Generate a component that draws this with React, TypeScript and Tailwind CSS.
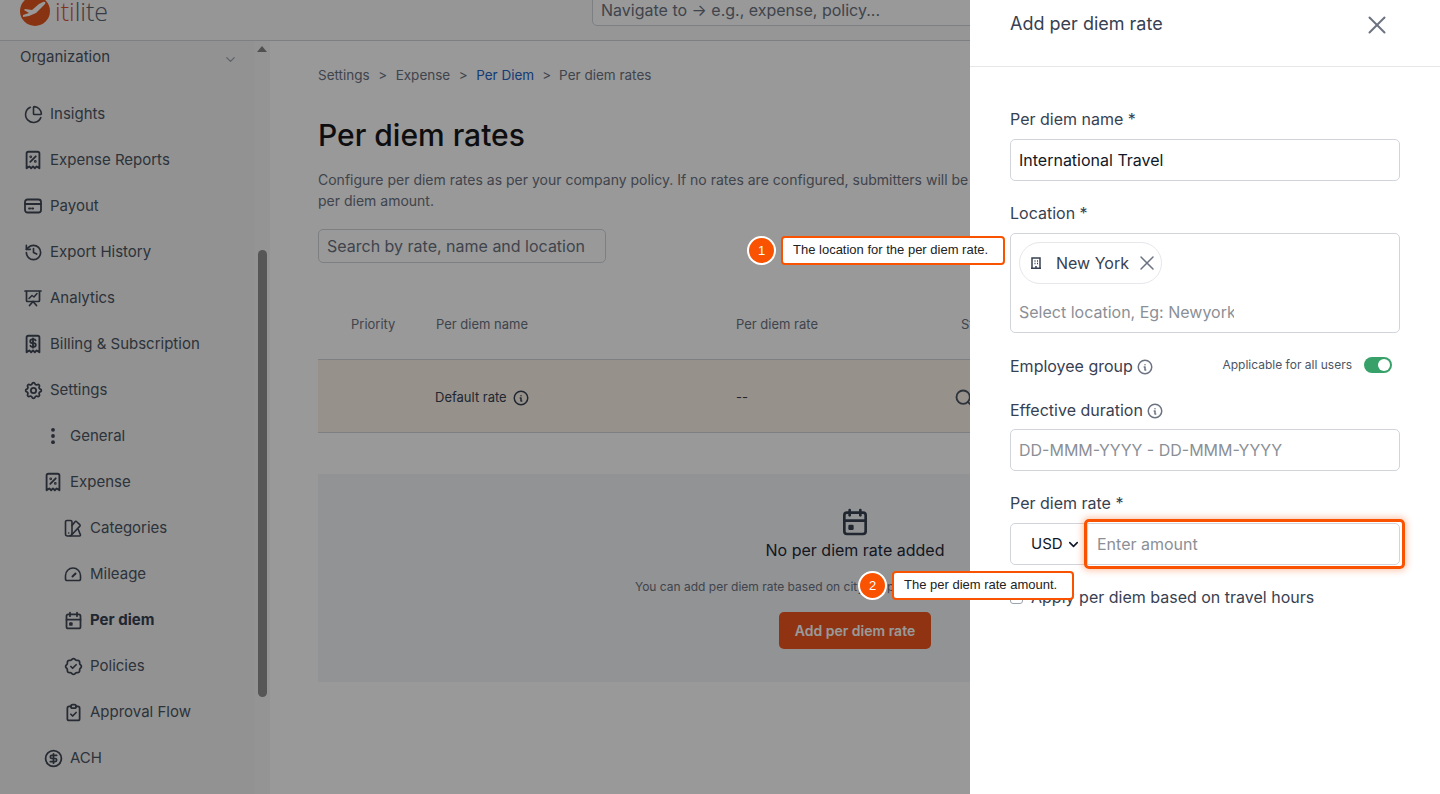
import type { ReactNode } from 'react';
import { ChevronDown, History, ChartPie, Search, X, CircleDollarSign } from 'lucide-react';
import {
  TbReceiptTax,
  TbReceiptDollar,
  TbSettings,
  TbCalendarEvent,
  TbRosetteDiscountCheck,
  TbClipboardCheck,
  TbInfoCircle,
} from 'react-icons/tb';

function CardIcon() {
  return (
    <svg width="18" height="18" viewBox="0 0 18 18" fill="none" stroke="currentColor" strokeWidth="1.8" strokeLinecap="round">
      <rect x="1" y="2.5" width="16" height="13" rx="2.5" />
      <path d="M1 7h16M5 11.5h1.2M8 11.5h1.2" />
    </svg>
  );
}

function AnalyticsIcon() {
  return (
    <svg width="18" height="18" viewBox="0 0 18 18" fill="none" stroke="currentColor" strokeWidth="1.7" strokeLinecap="round" strokeLinejoin="round">
      <path d="M1 2h16M2.5 2v9.5a1 1 0 0 0 1 1h11a1 1 0 0 0 1-1V2" />
      <path d="M5 9.5l3-3 2 1.5 3-3.5" strokeWidth="1.5" />
      <path d="M5.5 16.5l3.5-4 3.5 4" />
    </svg>
  );
}

function DotsIcon() {
  return (
    <svg width="18" height="18" viewBox="0 0 18 18" fill="currentColor">
      <circle cx="9" cy="2.8" r="1.9" />
      <circle cx="9" cy="9" r="1.9" />
      <circle cx="9" cy="15.2" r="1.9" />
    </svg>
  );
}

function SwatchIcon() {
  return (
    <svg width="18" height="18" viewBox="0 0 18 18" fill="none" stroke="currentColor" strokeWidth="1.6" strokeLinejoin="round" strokeLinecap="round">
      <path d="M3 1.5h3.5A1.5 1.5 0 0 1 8 3v11a3 3 0 0 1-3 3H3.5a2 2 0 0 1-2-2V3A1.5 1.5 0 0 1 3 1.5Z" />
      <path d="M8 6.5l3-3.8a1 1 0 0 1 1.4-.2l3.4 3.2a1 1 0 0 1 .1 1.4L8 15.5" />
      <path d="M6 17h9.5a1 1 0 0 0 1-1l-2.2-5.5" />
      <path d="M4.7 14h.01" />
    </svg>
  );
}

function GaugeIcon() {
  return (
    <svg width="18" height="18" viewBox="0 0 18 18" fill="none" stroke="currentColor" strokeWidth="1.6" strokeLinecap="round" strokeLinejoin="round">
      <path d="M3 15.5h12a1.5 1.5 0 0 0 1.5-1.5V10.5a7.5 7.5 0 0 0-15 0V14a1.5 1.5 0 0 0 1.5 1.5Z" />
      <path d="M8.5 11.5l3-3" strokeWidth="2" />
    </svg>
  );
}

function BuildingIcon() {
  return (
    <svg width="12" height="12" viewBox="0 0 12 12" fill="none" stroke="currentColor" strokeWidth="1.5">
      <path d="M1 11.2h10M2 11V1h8v10" />
      <path d="M4.5 4h1M7 4h1M7 6.5h1M4.5 6.5h1M6 11V9" />
    </svg>
  );
}

function Logo() {
  return (
    <div className="flex items-center -mt-[9px]">
      <svg width="30" height="30" viewBox="0 0 30 30" className="shrink-0">
        <circle cx="15" cy="15" r="15" fill="#e3581f" />
        <path d="M3 21l6-1 7-3 9-9c1-1.5 0-2.5-2-2l-4 2-7 6-7-1-1 1 5 3-6 2Z" fill="#fff" />
      </svg>
      <span className="ml-[5px] text-[25px] leading-none font-light font-['Open_Sans',sans-serif]">
        <span className="text-[#d9542a]">iti</span>
        <span className="text-[#5b6470]">lite</span>
      </span>
    </div>
  );
}

const navTop: { label: string; icon: ReactNode }[] = [
  { label: 'Insights', icon: <ChartPie size={19} strokeWidth={2} /> },
  { label: 'Expense Reports', icon: <TbReceiptTax size={22} /> },
  { label: 'Payout', icon: <CardIcon /> },
  { label: 'Export History', icon: <History size={19} strokeWidth={2.1} /> },
  { label: 'Analytics', icon: <AnalyticsIcon /> },
  { label: 'Billing & Subscription', icon: <TbReceiptDollar size={22} /> },
  { label: 'Settings', icon: <TbSettings size={21} /> },
];

const navExpense: { label: string; icon: ReactNode; active?: boolean }[] = [
  { label: 'Categories', icon: <SwatchIcon /> },
  { label: 'Mileage', icon: <GaugeIcon /> },
  { label: 'Per diem', icon: <TbCalendarEvent size={21} />, active: true },
  { label: 'Policies', icon: <TbRosetteDiscountCheck size={21} /> },
  { label: 'Approval Flow', icon: <TbClipboardCheck size={21} /> },
];

function NavRow({ icon, label, indent = 'pl-[24px]', bold }: { icon: ReactNode; label: string; indent?: string; bold?: boolean }) {
  return (
    <div className={`h-[46px] flex items-center ${indent} text-[#4b5563]`}>
      <span className="w-[18px] h-[18px] flex items-center justify-center shrink-0 text-[#3f4756] [&>svg]:shrink-0">{icon}</span>
      <span className={`ml-[8px] text-[15px] ${bold ? 'font-bold text-[#374151]' : ''}`}>{label}</span>
    </div>
  );
}

function Sidebar() {
  return (
    <aside className="w-[270px] shrink-0 flex h-[753px] overflow-hidden">
      <div className="w-[254px] bg-[#f3f3f3] shrink-0">
        <div className="h-[32px] flex items-center justify-between pl-[20px] pr-[16px]">
          <span className="text-[15px] text-[#4b5563]">Organization</span>
          <ChevronDown size={15} className="text-[#9ca3af] mt-[5px]" />
        </div>
        <div className="pt-[18px]">
          {navTop.map((n) => (
            <NavRow key={n.label} icon={n.icon} label={n.label} />
          ))}
          <NavRow icon={<DotsIcon />} label="General" indent="pl-[44px]" />
          <NavRow icon={<TbReceiptTax size={22} />} label="Expense" indent="pl-[44px]" />
          {navExpense.map((n) => (
            <NavRow key={n.label} icon={n.icon} label={n.label} indent="pl-[64px]" bold={n.active} />
          ))}
          <NavRow icon={<CircleDollarSign size={19} strokeWidth={2.2} />} label="ACH" indent="pl-[44px]" />
        </div>
      </div>
      <div className="w-[16px] bg-[#f7f7f7] flex flex-col items-center shrink-0 pt-[5px]">
        <div className="w-0 h-0 border-l-[5px] border-r-[5px] border-b-[6px] border-l-transparent border-r-transparent border-b-[#858585]" />
        <div className="w-[9px] h-[447px] mt-[198px] rounded-full bg-[#8f8f8f]" />
      </div>
    </aside>
  );
}

function MainContent() {
  return (
    <main className="flex-1 min-w-0 pl-[48px] pr-[48px] pt-[24px] bg-white">
      <div className="flex items-center h-[20px] text-[13.5px] text-[#6b7280]">
        <span>Settings</span>
        <span className="mx-[8.5px]">&gt;</span>
        <span>Expense</span>
        <span className="mx-[8.5px]">&gt;</span>
        <span className="text-[#2563c4]">Per Diem</span>
        <span className="mx-[8px]">&gt;</span>
        <span>Per diem rates</span>
      </div>
      <h1 className="mt-[30px] text-[30px] leading-[40px] font-medium text-[#18181b]">Per diem rates</h1>
      <p className="mt-[14px] text-[14px] leading-[21px] text-[#6b7280] whitespace-nowrap">
        Configure per diem rates as per your company policy. If no rates are configured, submitters will be able to enter the
        <br />
        per diem amount.
      </p>
      <div className="mt-[18px] w-[288px] h-[34px] border border-[#d1d5db] rounded-[5px] flex items-center pl-[8px] text-[16px] text-[#6b7280]">
        Search by rate, name and location
      </div>

      <div className="mt-[41px] h-[56px] flex items-start pt-[12px] text-[13px] leading-[16px] text-[#6b7280] border-b border-[#d1d5db]">
        <span className="w-[118px] pl-[33px]">Priority</span>
        <span className="w-[300px]">Per diem name</span>
        <span className="w-[225px]">Per diem rate</span>
        <span>Status</span>
      </div>
      <div className="h-[73px] pt-[3px] flex items-center text-[13px] text-[#374151] bg-[#fbf2e8] border-b border-[#d1d5db]">
        <span className="w-[117px]" />
        <span className="w-[301px] flex items-center gap-[5px]">
          Default rate <TbInfoCircle size={18} />
        </span>
        <span className="w-[218px]">--</span>
        <Search size={20} strokeWidth={2.2} className="text-[#4b5563]" />
      </div>

      <div className="mt-[41px] h-[208px] bg-[#f3f5f8] flex flex-col items-center pt-[32px]">
        <TbCalendarEvent size={32} className="text-[#374151]" />
        <div className="text-[16px] leading-[24px] text-[#1f2937]">No per diem rate added</div>
        <div className="mt-[16px] text-[12px] leading-[18px] text-[#6b7280] whitespace-nowrap">
          You can add per diem rate based on city, as per your company's travel policy.
        </div>
        <button className="mt-[16px] w-[152px] h-[37px] rounded-[5px] bg-[#f0561f] text-white text-[14px] font-semibold">
          Add per diem rate
        </button>
      </div>
    </main>
  );
}

function Field({ label, className, children }: { label: ReactNode; className: string; children: ReactNode }) {
  return (
    <div className={className}>
      <div className="h-[20px] flex items-center text-[16px] text-[#374151]">{label}</div>
      {children}
    </div>
  );
}

function Drawer() {
  return (
    <aside className="absolute top-0 right-0 bottom-0 w-[470px] bg-white">
      <div className="h-[67px] border-b border-[#e5e7eb] pl-[40px] pr-[48px] flex justify-between pt-[12px]">
        <span className="text-[18px] leading-[24px] text-[#374151]">Add per diem rate</span>
        <X size={30} strokeWidth={1.6} className="text-[#6b7280] -mt-[2px]" />
      </div>
      <div className="pl-[40px] pr-[40px]">
        <Field label="Per diem name *" className="pt-[42px]">
          <div className="mt-[10px] h-[42px] border border-[#d1d5db] rounded-[5px] flex items-center pl-[8px] text-[16px] text-[#111827]">
            International Travel
          </div>
        </Field>
        <Field label="Location *" className="pt-[22px]">
          <div className="mt-[10px] h-[100px] border border-[#d1d5db] rounded-[5px] pl-[8px] pt-[8px]">
            <div className="inline-flex items-center h-[42px] border border-[#e5e7eb] rounded-full pl-[10px] pr-[2px] text-[16px] text-[#374151]">
              <BuildingIcon />
              <span className="ml-[14px]">New York</span>
              <X size={24} strokeWidth={1.5} className="ml-[6px] text-[#6b7280]" />
            </div>
            <div className="mt-[16px] w-[215px] overflow-hidden whitespace-nowrap text-[16px] leading-[24px] text-[#8b8f96]">
              Select location, Eg: Newyork
            </div>
          </div>
        </Field>
        <div className="pt-[23px] flex items-center justify-between h-[43px] pr-[8px]">
          <span className="flex items-center gap-[3px] text-[16px] text-[#374151]">
            Employee group <TbInfoCircle size={18} className="text-[#6b7280] mt-[2px]" />
          </span>
          <span className="flex items-center gap-[12px] text-[12px] text-[#4b5563] -mt-[2px]">
            Applicable for all users
            <span className="w-[28px] h-[16px] rounded-full bg-[#38a169] flex items-center justify-end pr-[2px]">
              <span className="w-[12px] h-[12px] rounded-full bg-white" />
            </span>
          </span>
        </div>
        <Field
          label={
            <span className="flex items-center gap-[3px]">
              Effective duration <TbInfoCircle size={18} className="text-[#6b7280] mt-[2px]" />
            </span>
          }
          className="pt-[24px]"
        >
          <div className="mt-[9px] h-[42px] border border-[#d1d5db] rounded-[5px] flex items-center pl-[8px] text-[16px] text-[#8b8f96]">
            DD-MMM-YYYY - DD-MMM-YYYY
          </div>
        </Field>
        <Field label="Per diem rate *" className="pt-[22px]">
          <div className="mt-[10px] flex h-[42px]">
            <div className="w-[77px] border border-[#d1d5db] rounded-l-[5px] flex items-center pl-[20px] text-[15px] text-[#111827]">
              USD
              <ChevronDown size={15} strokeWidth={2.5} className="ml-[3px]" />
            </div>
            <div className="flex-1 border border-[#d1d5db] rounded-r-[5px] flex items-center pl-[9px] text-[16px] text-[#8b8f96]">
              Enter amount
            </div>
          </div>
        </Field>
        <div className="mt-[20px] flex items-center gap-[8px] text-[16px] text-[#374151]">
          <span className="w-[13px] h-[13px] border border-[#9ca3af] rounded-[3px]" />
          Apply per diem based on travel hours
        </div>
      </div>
    </aside>
  );
}

function Callout({ n, text, className }: { n: number; text: string; className: string }) {
  return (
    <div className={`absolute flex items-center ${className}`}>
      <span className="w-[29px] h-[29px] rounded-full bg-[#f95200] border-2 border-white text-white flex items-center justify-center text-[13px] font-['Liberation_Sans',sans-serif]">
        {n}
      </span>
      <span className="ml-[5px] h-[29px] pl-[10px] pr-[15px] pb-[2px] flex items-center bg-white border-2 border-[#f95200] rounded-[4px] text-[13px] text-[#222] whitespace-nowrap font-['Liberation_Sans',sans-serif]">
        {text}
      </span>
    </div>
  );
}

export default function App() {
  return (
    <div className="relative h-[794px] w-[1440px] overflow-hidden bg-white font-['Inter',sans-serif]">
      <header className="h-[41px] border-b border-[#d1d5db] flex items-start pl-[20px] bg-[#fafafa] overflow-hidden">
        <div className="w-[572px] shrink-0 pt-[5px]">
          <Logo />
        </div>
        <div className="w-[600px] h-[32px] -mt-[6px] pl-[8px] flex items-center border border-[#d1d5db] rounded-[5px] text-[16px] text-[#6b7280] bg-white whitespace-nowrap">
          Navigate to → e.g., expense, policy...
        </div>
      </header>
      <div className="flex">
        <Sidebar />
        <MainContent />
      </div>

      {/* dim layer under the drawer */}
      <div className="absolute inset-0 bg-black/40" />
      <Drawer />

      {/* walkthrough callouts */}
      <div className="absolute left-[1084px] top-[519px] w-[321px] h-[50px] rounded-[5px] border-[3px] border-[#f95200] shadow-[0_0_6px_2px_rgba(249,82,0,0.3)]" />
      <Callout n={1} text="The location for the per diem rate." className="left-[747px] top-[236px]" />
      <Callout n={2} text="The per diem rate amount." className="left-[858px] top-[571px]" />
    </div>
  );
}
